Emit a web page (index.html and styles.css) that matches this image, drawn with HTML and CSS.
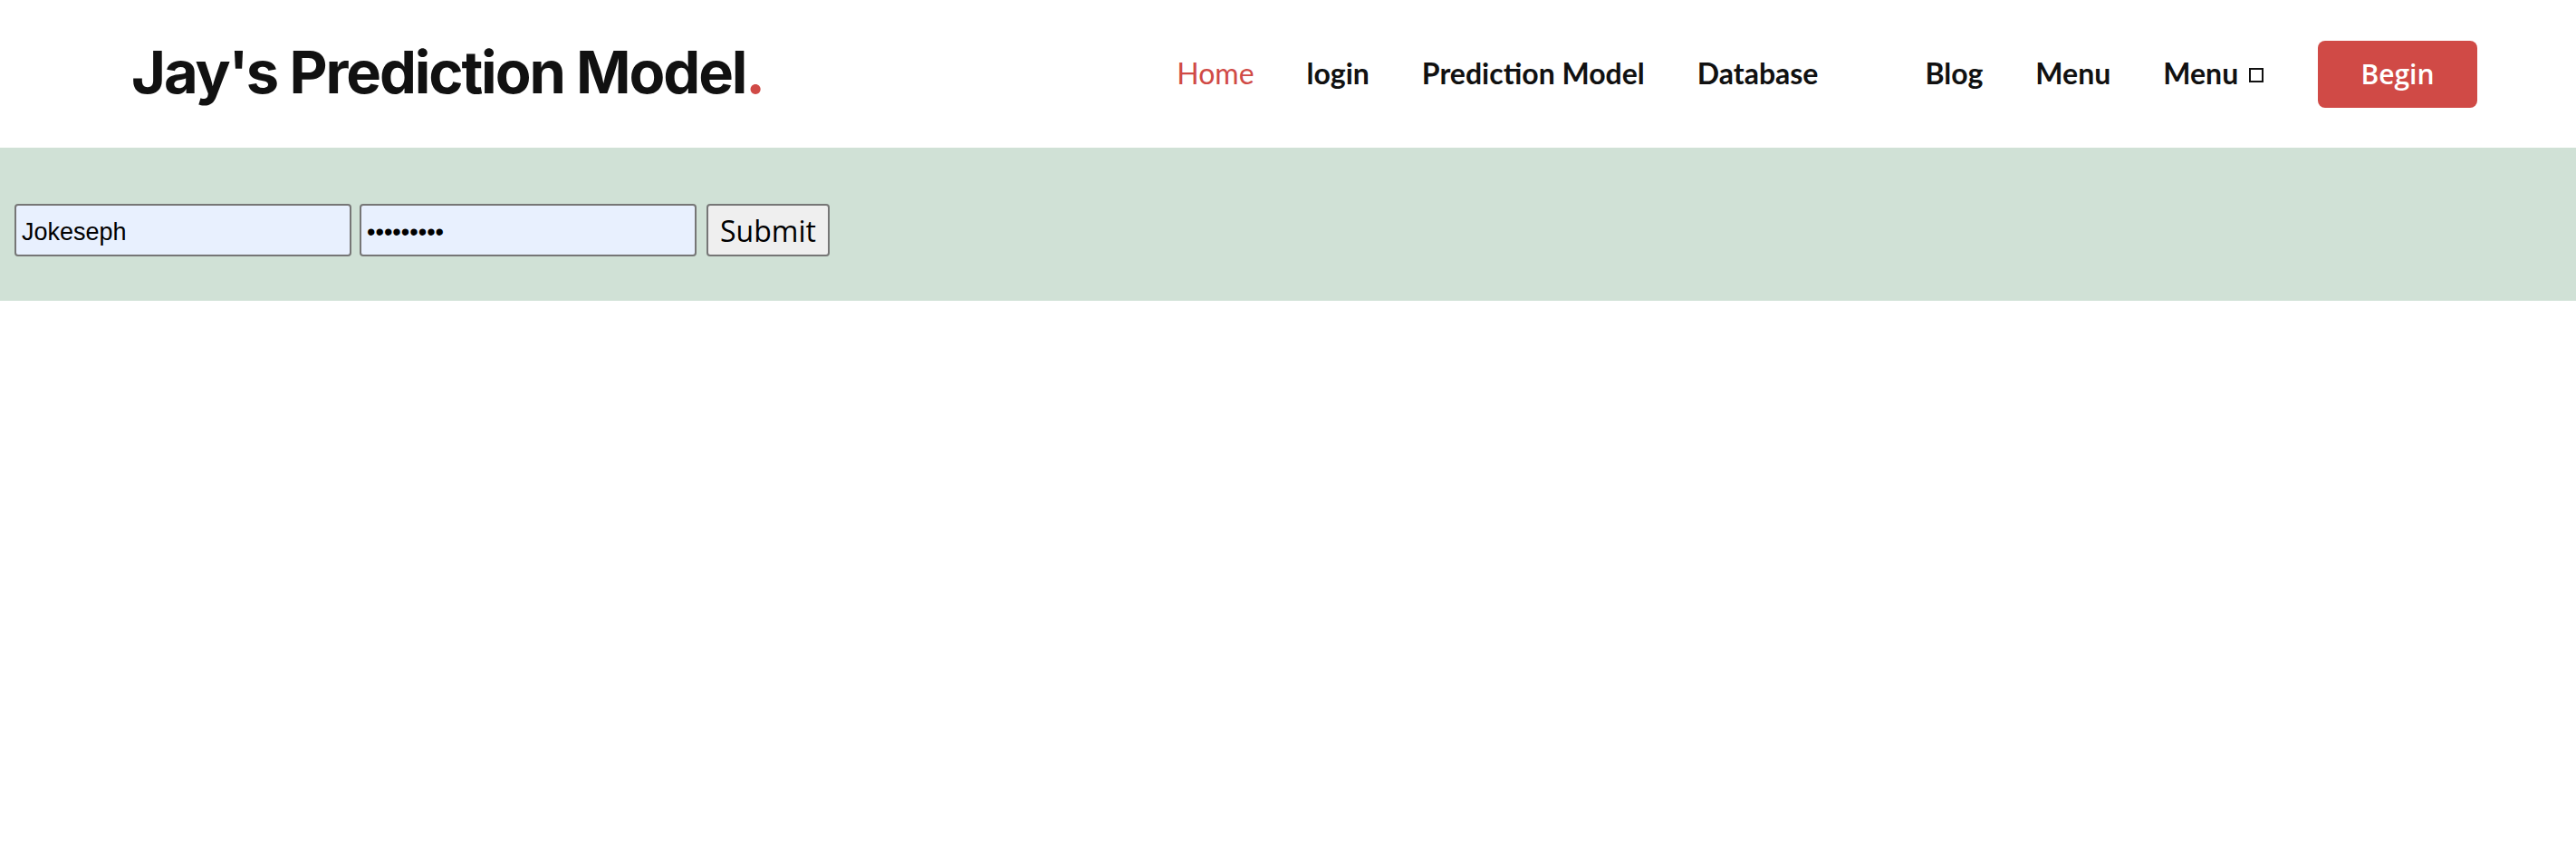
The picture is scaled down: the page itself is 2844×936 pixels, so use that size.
FILE: index.html
```html
<!DOCTYPE html>
<html lang="en">
<head>
<meta charset="utf-8">
<title>Jay's Prediction Model</title>
<link rel="stylesheet" href="styles.css">
</head>
<body>
<header class="site-header">
  <div class="logo">Jay's Prediction Model<span class="dot">.</span></div>
  <nav class="nav">
    <a class="nav-link active" href="#">Home</a>
    <a class="nav-link" href="#">login</a>
    <a class="nav-link" href="#">Prediction Model</a>
    <a class="nav-link" href="#">Database</a>
    <a class="nav-link empty" href="#"></a>
    <a class="nav-link" href="#">Blog</a>
    <a class="nav-link" href="#">Menu</a>
    <a class="nav-link" href="#">Menu <span class="box"></span></a>
    <a class="btn-begin" href="#">Begin</a>
  </nav>
</header>
<section class="band">
  <form class="login-form">
    <input class="field" type="text" value="Jokeseph">
    <input class="field" type="password" value="password1">
    <button class="submit" type="button">Submit</button>
  </form>
</section>
</body>
</html>
```
FILE: styles.css
```css
html, body {
  margin: 0;
  padding: 0;
  background: #ffffff;
}

.site-header {
  height: 163px;
  display: flex;
  align-items: center;
  justify-content: space-between;
  padding: 0 109px 0 145px;
  box-sizing: border-box;
}

.logo {
  font-family: "Inter", "DejaVu Sans", sans-serif;
  font-weight: 700;
  font-size: 65px;
  color: #111111;
  letter-spacing: -2.1px;
  line-height: 1;
  margin-top: -4px;
}

.logo .dot {
  color: #d04a46;
}

.nav {
  display: flex;
  align-items: center;
  gap: 58px;
  margin-top: -2px;
}

.nav-link {
  font-family: "Lato", "Liberation Sans", sans-serif;
  font-weight: 700;
  font-size: 32px;
  color: #111111;
  text-decoration: none;
  line-height: 1;
}

.nav-link.active {
  color: #d04a46;
  font-weight: 400;
}

.nav-link.empty {
  width: 2px;
}

.box {
  display: inline-block;
  width: 16px;
  height: 16px;
  border: 2px solid #111;
  box-sizing: border-box;
  margin-left: 4px;
  vertical-align: 2px;
}

.btn-begin {
  display: flex;
  align-items: center;
  justify-content: center;
  width: 176px;
  height: 74px;
  border-radius: 8px;
  background: #d04a46;
  color: #ffffff;
  font-family: "Open Sans", "Liberation Sans", sans-serif;
  font-weight: 600;
  font-size: 30px;
  text-decoration: none;
  margin-top: 2px;
  margin-left: 2px;
}

.band {
  background: #d0e1d6;
  height: 169px;
  box-sizing: border-box;
  padding: 62px 0 0 16px;
}

.login-form {
  display: flex;
  align-items: center;
}

.field {
  width: 372px;
  height: 58px;
  box-sizing: border-box;
  border: 2px solid #767676;
  border-radius: 4px;
  background: #e8f0fe;
  font-family: "Liberation Sans", Arial, sans-serif;
  font-size: 27px;
  padding: 4px 6px 0;
  margin: 0 9px 0 0;
  color: #000;
}

.field + .field {
  margin-right: 11px;
}

.submit {
  height: 58px;
  width: 136px;
  box-sizing: border-box;
  border: 2px solid #767676;
  border-radius: 4px;
  background: #efefef;
  font-family: "Open Sans", "Noto Sans", sans-serif;
  font-size: 32px;
  color: #000;
  padding: 0;
}
```
